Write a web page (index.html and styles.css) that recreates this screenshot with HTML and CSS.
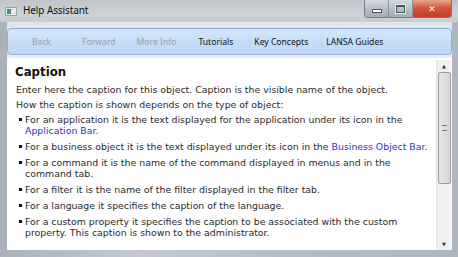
FILE: index.html
```html
<!DOCTYPE html>
<html lang="en">
<head>
  <meta charset="UTF-8">
  <title>Help Assistant</title>
  <link rel="stylesheet" href="styles.css">
</head>
<body>
<div class="window">
  <div class="titlebar">
    <span class="app-icon"><span class="app-icon-mark"></span></span>
    <span class="title">Help Assistant</span>
    <div class="controls">
      <span class="ctl ctl-min"><span class="min-bar"></span></span>
      <span class="ctl ctl-max"><span class="max-box"></span></span>
      <span class="ctl ctl-close">&#x2715;</span>
    </div>
  </div>
  <div class="frame">
    <div class="toolbar">
      <span class="nav disabled">Back</span>
      <span class="nav disabled">Forward</span>
      <span class="nav disabled">More Info</span>
      <span class="nav">Tutorials</span>
      <span class="nav">Key Concepts</span>
      <span class="nav">LANSA Guides</span>
    </div>
    <div class="content">
      <div class="doc">
        <h1>Caption</h1>
        <p>Enter here the caption for this object. Caption is the visible name of the object.</p>
        <p>How the caption is shown depends on the type of object:</p>
        <ul>
          <li>For an application it is the text displayed for the application under its icon in the <a href="#">Application Bar</a>.</li>
          <li>For a business object it is the text displayed under its icon in the <a href="#">Business Object Bar</a>.</li>
          <li>For a command it is the name of the command displayed in menus and in the command tab.</li>
          <li>For a filter it is the name of the filter displayed in the filter tab.</li>
          <li>For a language it specifies the caption of the language.</li>
          <li>For a custom property it specifies the caption to be associated with the custom property. This caption is shown to the administrator.</li>
        </ul>
      </div>
      <div class="scrollbar">
        <span class="arrow">&#9650;</span>
        <div class="thumb"><span class="grip"></span></div>
        <div class="track"></div>
        <span class="arrow">&#9660;</span>
      </div>
    </div>
  </div>
</div>
</body>
</html>
```

FILE: styles.css
```css
body {
  margin: 0;
  width: 458px;
  height: 257px;
  overflow: hidden;
  font-family: "DejaVu Sans", Verdana, sans-serif;
}

.window {
  width: 458px;
  height: 257px;
  display: flex;
  flex-direction: column;
  background: linear-gradient(90deg, #a9b2bb 0%, #c3c9cf 30%, #b7bec6 60%, #aeb6bf 100%);
}

.titlebar {
  height: 22px;
  display: flex;
  align-items: flex-start;
  background: linear-gradient(180deg, #bfc5cb 0%, #cdd2d7 60%, #c6ccd2 100%);
}

.app-icon {
  width: 10px;
  height: 7px;
  margin: 7px 0 0 5px;
  background: #e4e8ea;
  border: 1px solid #9aa4a8;
  display: flex;
}

.app-icon-mark {
  width: 4px;
  height: 5px;
  margin: 1px;
  background: #3c9a6a;
}

.title {
  font-family: "Noto Sans", sans-serif;
  font-size: 10px;
  color: #111;
  margin: 3px 0 0 6px;
  letter-spacing: -0.1px;
}

.controls {
  margin-left: auto;
  margin-right: 6px;
  display: flex;
  height: 17px;
  border: 1px solid #737c86;
  border-top: none;
  border-radius: 0 0 4px 4px;
  overflow: hidden;
}

.ctl {
  display: flex;
  align-items: center;
  justify-content: center;
}

.ctl-min, .ctl-max {
  width: 23px;
  background: linear-gradient(180deg, #d4d9de 0%, #b9c0c7 50%, #a3abb4 100%);
  border-right: 1px solid #8a939c;
}

.min-bar {
  width: 8px;
  height: 2px;
  margin-top: 5px;
  background: #fff;
  border: 1px solid #4a535c;
}

.max-box {
  width: 7px;
  height: 5px;
  border: 1px solid #4a535c;
  border-top-width: 2px;
  background: transparent;
  box-shadow: 0 0 0 1px #eef1f4;
}

.ctl-close {
  width: 38px;
  background: linear-gradient(180deg, #e8a493 0%, #d4573f 45%, #c23a22 100%);
  color: #fff;
  font-size: 9px;
  font-weight: bold;
}

.frame {
  flex: 1;
  margin: 0 6px 7px 7px;
  display: flex;
  flex-direction: column;
  padding-top: 6px;
  background: linear-gradient(180deg, #dfe5ea 0px, #e7ecf0 30px, #e7ecf0 100%);
}

.toolbar {
  height: 25px;
  display: flex;
  align-items: center;
  background: linear-gradient(180deg, #d6e7fb 0%, #c6ddf7 50%, #bcd6f5 100%);
  border: 1px solid #8eb0da;
  border-radius: 4px;
  font-family: "Noto Sans", sans-serif;
  font-size: 8.6px;
  color: #111;
}

.nav {
  flex: none;
}

.nav:nth-child(1) { margin-left: 24px; }
.nav:nth-child(2) { margin-left: 31px; }
.nav:nth-child(3) { margin-left: 21px; }
.nav:nth-child(4) { margin-left: 22px; }
.nav:nth-child(5) { margin-left: 21px; }
.nav:nth-child(6) { margin-left: 18px; }

.nav.disabled {
  color: #9aa2ab;
}

.content {
  flex: 1;
  margin-top: 3px;
  display: flex;
  background: #fff;
  min-height: 0;
}

.doc {
  flex: 1;
  padding: 7px 4px 0 8px;
  color: #2a2a2a;
  font-size: 9.4px;
  line-height: 11px;
  overflow: hidden;
}

.doc h1 {
  font-size: 11.8px;
  line-height: 15px;
  margin: 0 0 4px 0;
  color: #111;
}

.doc p {
  margin: 0 0 4px 1px;
}

.doc ul {
  list-style: none;
  margin: 0;
  padding: 0 0 0 10px;
}

.doc li {
  position: relative;
  margin-bottom: 5px;
}

.doc li::before {
  content: "";
  position: absolute;
  left: -6px;
  top: 4px;
  width: 3px;
  height: 3px;
  background: #111;
}

.doc a {
  color: #3333cc;
  text-decoration: none;
}

.scrollbar {
  width: 14px;
  margin: 2px 1px 0 0;
  display: flex;
  flex-direction: column;
  align-items: center;
  background: #f0f0f0;
  border-left: 1px solid #e2e2e2;
}

.arrow {
  font-size: 5px;
  color: #333;
  height: 12px;
  line-height: 12px;
}

.thumb {
  width: 11px;
  height: 110px;
  background: linear-gradient(90deg, #e6e6e6, #d6d6d6);
  border: 1px solid #9c9c9c;
  border-radius: 2px;
  display: flex;
  align-items: center;
  justify-content: center;
}

.grip {
  width: 5px;
  height: 4px;
  border-top: 1px solid #777;
  border-bottom: 1px solid #777;
}

.track {
  flex: 1;
}
```
